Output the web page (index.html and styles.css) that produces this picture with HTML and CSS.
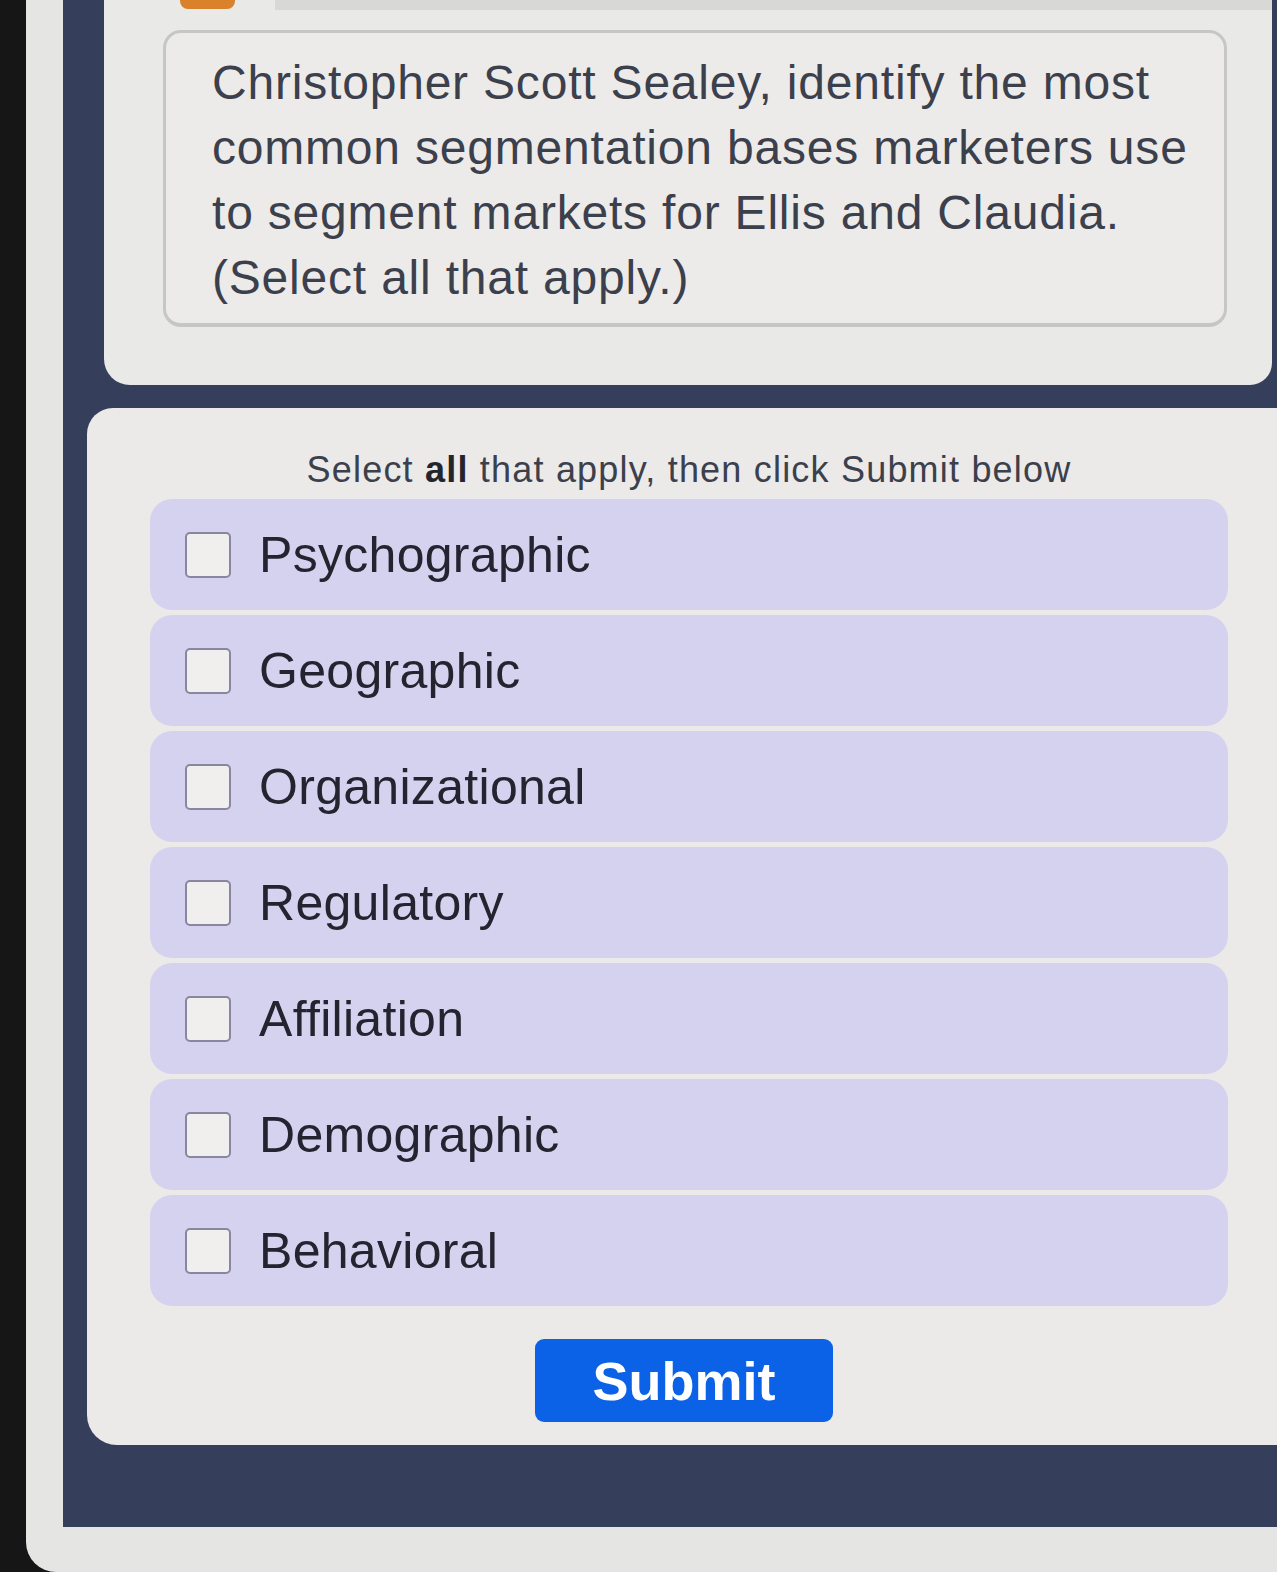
FILE: index.html
```html
<!DOCTYPE html>
<html>
<head>
<meta charset="utf-8">
<link rel="stylesheet" href="styles.css">
</head>
<body>
<div class="frame">
  <div class="navy">
    <div class="top-card">
      <div class="header">
        <div class="avatar"></div>
        <div class="hbar"></div>
      </div>
      <div class="question">Christopher Scott Sealey, identify the most<br>common segmentation bases marketers use<br>to segment markets for Ellis and Claudia.<br>(Select all that apply.)</div>
    </div>
    <div class="main-card">
      <div class="options">
        <p class="instr">Select <b>all</b> that apply, then click Submit below</p>
        <label class="opt"><span class="box"></span><span class="lbl">Psychographic</span></label>
        <label class="opt"><span class="box"></span><span class="lbl">Geographic</span></label>
        <label class="opt"><span class="box"></span><span class="lbl">Organizational</span></label>
        <label class="opt"><span class="box"></span><span class="lbl">Regulatory</span></label>
        <label class="opt"><span class="box"></span><span class="lbl">Affiliation</span></label>
        <label class="opt"><span class="box"></span><span class="lbl">Demographic</span></label>
        <label class="opt"><span class="box"></span><span class="lbl">Behavioral</span></label>
        <div class="submit-row"><button class="submit">Submit</button></div>
      </div>
    </div>
  </div>
</div>
</body>
</html>
```
FILE: styles.css
```css
html, body {
  margin: 0;
  padding: 0;
}
body {
  width: 1277px;
  height: 1572px;
  overflow: hidden;
  background: #161616;
  font-family: "Liberation Sans", Arial, sans-serif;
}
.frame {
  margin-left: 26px;
  height: 1572px;
  box-sizing: border-box;
  background: #e5e5e3;
  border-bottom-left-radius: 30px;
  padding-left: 37px;
  padding-bottom: 45px;
}
.navy {
  height: 100%;
  background: #353f5b;
  padding-left: 24px;
  display: flex;
  flex-direction: column;
  gap: 23px;
}
.top-card {
  margin-left: 17px;
  width: 1168px;
  height: 385px;
  box-sizing: border-box;
  background: #e9e9e7;
  border-radius: 0 0 22px 26px;
  display: flex;
  flex-direction: column;
}
.header {
  height: 10px;
  display: flex;
}
.avatar {
  margin-left: 76px;
  width: 55px;
  height: 9px;
  background: #d9822b;
  border-radius: 0 0 8px 8px;
}
.hbar {
  margin-left: 40px;
  flex: 1;
  height: 10px;
  background: #d8d8d6;
}
.question {
  margin-top: 20px;
  margin-left: 59px;
  width: 1064px;
  height: 297px;
  box-sizing: border-box;
  border: 3px solid #c6c6c4;
  border-bottom-width: 4px;
  border-radius: 18px;
  background: #ecebe9;
  padding: 17px 10px 0 46px;
  font-size: 48px;
  letter-spacing: 0.8px;
  line-height: 65px;
  color: #3b404c;
  white-space: nowrap;
}
.main-card {
  width: 1190px;
  height: 1037px;
  box-sizing: border-box;
  background: #ebeae8;
  border-radius: 26px 0 0 30px;
  padding-top: 40px;
}
.options {
  margin-left: 63px;
  width: 1078px;
  display: flex;
  flex-direction: column;
  gap: 5px;
}
.instr {
  margin: 0 0 3px 0;
  text-align: center;
  font-size: 36px;
  letter-spacing: 1.2px;
  line-height: 43px;
  color: #3b404c;
  white-space: nowrap;
}
.instr b {
  color: #22252e;
}
.opt {
  height: 111px;
  box-sizing: border-box;
  background: #d5d2ef;
  border-radius: 22px;
  display: flex;
  align-items: center;
  padding-left: 35px;
}
.box {
  width: 46px;
  height: 46px;
  box-sizing: border-box;
  background: #f0efee;
  border: 2px solid #8886a0;
  border-radius: 5px;
  flex: none;
}
.lbl {
  margin-left: 28px;
  font-size: 50px;
  letter-spacing: 0.3px;
  color: #22242f;
}
.submit-row {
  margin-top: 28px;
  display: flex;
  justify-content: center;
  padding-right: 10px;
}
.submit {
  width: 298px;
  height: 83px;
  border: none;
  border-radius: 9px;
  background: #0b62e6;
  color: #ffffff;
  font-family: "Liberation Sans", Arial, sans-serif;
  font-weight: bold;
  font-size: 54px;
  padding: 0;
}
```
